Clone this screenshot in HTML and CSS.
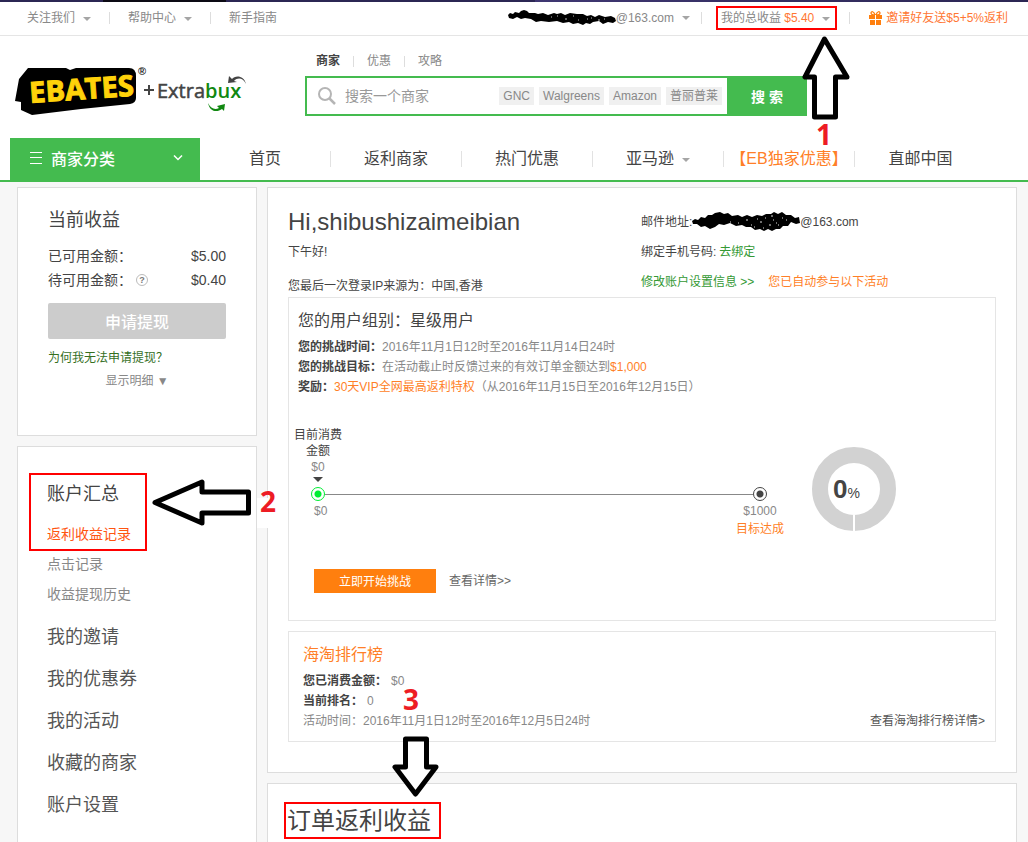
FILE: index.html
```html
<!DOCTYPE html>
<html lang="zh-CN">
<head>
    <meta charset="UTF-8">
    <meta name="viewport" content="width=device-width, initial-scale=1.0">
    <title>Ebates - 账户汇总</title>
    <link rel="stylesheet" href="styles.css">
</head>
<body>
    <div class="edge"></div>
    <div class="topbar">
        <ul class="top-links">
            <li><a href="#">关注我们<i class="caret"></i></a></li>
            <li><a href="#">帮助中心<i class="caret"></i></a></li>
            <li><a href="#">新手指南</a></li>
        </ul>
        <ul class="top-user">
            <li>
                <a href="#" class="account">
                    <svg width="109" height="18" viewBox="0 0 109 18">
                        <path d="M1 6 L3 4 L6 5 L8 3 L12 4 L14 2 L17 1 L20 2 L22 4 L28 4 L31 5 L36 4 L41 6 L47 4 L50 5 L54 4 L58 6 L63 4 L70 5 L76 5 L80 7 L84 6 L88 8 L92 6 L98 8 L104 7 L108 9 L109 12 L106 14 L101 13 L96 15 L92 12 L86 13 L83 15 L79 14 L76 16 L71 14 L66 15 L62 13 L56 14 L50 12 L42 13 L34 12 L29 13 L24 10 L18 9 L14 10 L10 8 L6 10 L2 9 Z" fill="#000"/>
                        <path d="M44 8h1M50 7h1M58 10h2M66 7h1M71 11h1M80 10h1M84 9h1M91 11h2M97 10h1" stroke="#bbb"/>
                    </svg>@163.com<i class="caret"></i>
                </a>
            </li>
            <li class="earn-item">
                <a href="#" class="earnings">我的总收益 <b>$5.40</b><i class="caret"></i></a>
                <svg class="mark mark-1" width="48" height="124" viewBox="0 0 48 124">
                    <path d="M22.5 3 L3 41 H12.5 V81 H33.5 V41 H45 Z"/>
                    <text x="14" y="109">1</text>
                </svg>
            </li>
            <li>
                <a href="#" class="invite">
                    <svg width="13" height="14" viewBox="0 0 13 14">
                        <path d="M0 4h6v4H0z M7 4h6v4H7z M1 9h5v5H1z M7 9h5v5H7z" fill="#ff7f0e"/>
                        <path d="M6 4C3 4 2 3 2 2C2 0 5 0 6 4M7 4C10 4 11 3 11 2C11 0 8 0 7 4" fill="none" stroke="#ff7f0e" stroke-width="1.3"/>
                    </svg>邀请好友送$5+5%返利
                </a>
            </li>
        </ul>
    </div>

    <header class="header">
        <a href="#" class="logo" aria-label="Ebates + Extrabux">
            <svg width="234" height="52" viewBox="0 0 234 52">
                <path d="M13 2 H51 L55 4 L61 2 H114 Q121 2 121 10 V32 Q121 37 115 38 L66 43 L17 49 L6 44 V36 L0 35 L4 13 Z" fill="#000"/>
                <text class="logo-ebates" x="15" y="37" transform="rotate(-4 15 37)">EBATES</text>
                <text class="logo-reg" x="123" y="9">®</text>
                <path d="M129 24 H139 M134 19 V29" stroke="#444" stroke-width="2"/>
                <text class="logo-extra" x="142" y="32">Extra<tspan>bux</tspan></text>
                <path d="M231 18 C229 9 220 9 217 13 L214 10 L213 17 L222 16 L219 15 C223 11 228 12 231 18 Z" fill="#444"/>
                <path d="M193 37 C195 47 203 46 207 43 L209 45 L210 38 L202 40 L204 42 C200 44 196 43 193 37 Z" fill="#118811"/>
            </svg>
        </a>
        <div class="search-area">
            <div class="search-tabs">
                <a href="#" class="active">商家</a>
                <a href="#">优惠</a>
                <a href="#">攻略</a>
            </div>
            <form class="search">
                <svg width="18" height="18" viewBox="0 0 18 18" fill="none" stroke="#b5b5b5" stroke-width="2">
                    <circle cx="7" cy="7" r="6"/>
                    <path d="M11.500 11.500 L17 17" stroke-width="2.500"/>
                </svg>
                <input type="text" placeholder="搜索一个商家" aria-label="搜索一个商家">
                <div class="hot-words">
                    <a href="#">GNC</a>
                    <a href="#">Walgreens</a>
                    <a href="#">Amazon</a>
                    <a href="#">普丽普莱</a>
                </div>
                <button type="button">搜 索</button>
            </form>
        </div>
    </header>

    <nav class="nav">
        <button type="button" class="category">
            <svg width="12" height="12" viewBox="0 0 12 12" stroke="#fff"><path d="M0 .5h12M0 5.500h12M0 11.500h12"/></svg>
            <span>商家分类</span>
            <svg width="10" height="6" viewBox="0 0 10 6" fill="none" stroke="#fff" stroke-width="1.500"><path d="M1 .5l4 4 4-4"/></svg>
        </button>
        <ul>
            <li><a href="#">首页</a></li>
            <li><a href="#">返利商家</a></li>
            <li><a href="#">热门优惠</a></li>
            <li><a href="#">亚马逊<i class="caret"></i></a></li>
            <li><a href="#" class="orange">【EB独家优惠】</a></li>
            <li><a href="#">直邮中国</a></li>
        </ul>
    </nav>

    <main class="main">
        <aside class="sidebar">
            <section class="panel balance">
                <h2>当前收益</h2>
                <p class="balance-row">已可用金额：<span>$5.00</span></p>
                <p class="balance-row">待可用金额：<i class="help">?</i><span>$0.40</span></p>
                <button type="button" class="withdraw" disabled>申请提现</button>
                <a href="#" class="why">为何我无法申请提现？</a>
                <a href="#" class="detail">显示明细 ▼</a>
            </section>
            <section class="panel menu">
                <div class="menu-summary">
                    <h2>账户汇总</h2>
                    <a href="#" class="current">返利收益记录</a>
                    <svg class="mark mark-2" width="140" height="60" viewBox="0 0 140 60">
                        <rect x="106" y="20" width="24" height="30" fill="#fff"/>
                        <path d="M4 24.500 L51 4 V14 H97.500 V35 H51 V45 Z"/>
                        <text x="109" y="34">2</text>
                    </svg>
                </div>
                <a href="#">点击记录</a>
                <a href="#">收益提现历史</a>
                <ul>
                    <li><a href="#">我的邀请</a></li>
                    <li><a href="#">我的优惠券</a></li>
                    <li><a href="#">我的活动</a></li>
                    <li><a href="#">收藏的商家</a></li>
                    <li><a href="#">账户设置</a></li>
                </ul>
            </section>
        </aside>

        <div class="content">
            <section class="panel overview">
                <div class="profile">
                    <div class="greeting">
                        <h1>Hi,shibushizaimeibian</h1>
                        <p>下午好!</p>
                        <p class="last-login">您最后一次登录IP来源为：中国,香港</p>
                    </div>
                    <div class="contact">
                        <p>邮件地址:<svg width="108" height="22" viewBox="0 0 108 22">
                            <path d="M0 10 L3 8 L6 9 L9 6 L13 7 L16 4 L20 4 L23 2 L28 1 L32 3 L36 2 L40 5 L46 4 L50 6 L55 4 L60 6 L65 4 L70 5 L74 3 L79 3 L82 1 L86 3 L90 1 L94 4 L99 4 L103 7 L107 6 L108 12 L104 13 L99 11 L96 15 L91 15 L88 18 L84 18 L80 20 L76 18 L72 20 L68 18 L63 19 L59 16 L54 16 L50 14 L44 15 L38 12 L32 14 L27 13 L23 16 L18 18 L13 15 L9 16 L5 13 L1 13 Z" fill="#000"/>
                            <path d="M38 11h1M46 12h1M54 9h2M59 14h1M62 16h1M68 11h2M73 7h1M77 14h2M81 9h1M84 12h1M86 14h1M90 7h1M71 17h1M65 8h1M79 5h2M94 9h1" stroke="#ddd"/>
                        </svg>@163.com</p>
                        <p>绑定手机号码: <a href="#" class="green">去绑定</a></p>
                        <p><a href="#" class="green">修改账户设置信息 &gt;&gt;</a><a href="#" class="orange joined">您已自动参与以下活动</a></p>
                    </div>
                </div>

                <div class="box challenge">
                    <h3>您的用户组别：星级用户</h3>
                    <p><b>您的挑战时间：</b>2016年11月1日12时至2016年11月14日24时</p>
                    <p><b>您的挑战目标：</b>在活动截止时反馈过来的有效订单金额达到<span class="orange">$1,000</span></p>
                    <p><b>奖励：</b><span class="orange">30天VIP全网最高返利特权</span>（从2016年11月15日至2016年12月15日）</p>
                    <div class="progress">
                        <div class="track">
                            <div class="track-now">
                                <span>目前消费金额</span>
                                <em>$0</em>
                                <i class="caret dark"></i>
                            </div>
                            <div class="track-line">
                                <i class="dot start"></i>
                                <i class="line"></i>
                                <i class="dot"></i>
                            </div>
                            <div class="track-ends">
                                <span>$0</span>
                                <span class="goal">$1000<em class="orange">目标达成</em></span>
                            </div>
                        </div>
                        <div class="donut"><p><b>0</b>%</p></div>
                    </div>
                    <div class="actions">
                        <button type="button">立即开始挑战</button>
                        <a href="#">查看详情&gt;&gt;</a>
                    </div>
                </div>

                <div class="box ranking">
                    <h3 class="orange">海淘排行榜</h3>
                    <p><b>您已消费金额：</b>$0</p>
                    <p><b>当前排名：</b>0</p>
                    <p class="ranking-time">活动时间：2016年11月1日12时至2016年12月5日24时 <a href="#">查看海淘排行榜详情&gt;</a></p>
                </div>
            </section>

            <section class="panel orders">
                <h2>订单返利收益
                    <svg class="mark mark-3" width="48" height="124" viewBox="0 0 48 124">
                        <text x="12" y="35">3</text>
                        <path d="M24.500 119 L4 92 H14.500 V64 H35.500 V92 H45 Z"/>
                    </svg>
                </h2>
            </section>
        </div>
    </main>
</body>
</html>
```
FILE: styles.css
```css
* {
    margin: 0;
    padding: 0;
    box-sizing: border-box;
}

body {
    display: flex;
    flex-direction: column;
    min-height: 100vh;
    font-family: "Liberation Sans", "Noto Sans CJK SC", sans-serif;
    font-size: 12px;
    line-height: 20px;
    color: #444;
    background-color: #f7f7f7;
}

a {
    color: inherit;
    text-decoration: none;
}

ul {
    list-style: none;
}

i,
em {
    font-style: normal;
}

h1,
h2,
h3 {
    font-weight: normal;
}

button {
    border: none;
    font-family: inherit;
    cursor: pointer;
}

.orange {
    color: #ff7f27;
}

.green {
    color: #339933;
}

.caret {
    display: inline-block;
    border: 4px solid transparent;
    border-top-color: #a5a5a5;
    border-bottom: none;
    margin-left: 8px;
    vertical-align: middle;
}

.caret.dark {
    border-width: 5px;
    border-bottom: none;
    border-top-color: #444;
    margin: 0;
}

/* hand drawn notes over the page */
.mark {
    position: absolute;
    z-index: 10;
    pointer-events: none;
}

.mark path {
    fill: #fff;
    stroke: #000;
    stroke-width: 5px;
    stroke-linejoin: round;
}

.mark text {
    font: bold 28px "Open Sans", sans-serif;
    fill: #ed1c24;
}

/* top bar */
.edge {
    height: 2px;
    background: linear-gradient(90deg, #2b2653 10%, #0c0a14 10%, #0c0a14 22%, #2b2653 22%, #2b2653 52%, #3f3772 52%, #2b2653);
}

.topbar {
    display: flex;
    justify-content: space-between;
    align-items: center;
    height: 34px;
    padding: 0 20px 1px 27px;
    background-color: #fff;
    border-bottom: 1px solid #e5e5e5;
    color: #888;
}

.topbar ul {
    display: flex;
    align-items: center;
}

.topbar li {
    display: flex;
    align-items: center;
    white-space: nowrap;
}

.topbar li + li::before {
    content: "";
    height: 12px;
    margin: 0 18px;
    border-left: 1px solid #ddd;
}

.topbar .top-user li + li::before {
    margin: 0 19px 0 12px;
}

.topbar .top-user .earn-item::before {
    margin: 0 14px 0 11px;
}

.account,
.invite {
    display: flex;
    align-items: center;
}

.earn-item {
    position: relative;
}

.earnings {
    padding: 0 5px 0 3px;
    border: 2px solid #f00;
}

.earnings b {
    font-weight: normal;
    color: #ff7733;
}

.invite {
    gap: 4px;
    color: #ff7733;
}

.mark-1 {
    right: -13px;
    top: 30px;
}

/* header */
.header {
    display: flex;
    height: 102px;
    padding: 15px 15px 0;
    background-color: #fff;
}

.logo {
    flex: 0 0 290px;
    padding-top: 15px;
}

.logo-ebates {
    font: bold 29px "Open Sans", sans-serif;
    fill: #ffd20a;
    stroke: #ffd20a;
    stroke-width: 1px;
}

.logo-reg {
    font: bold 11px "Liberation Sans", sans-serif;
    fill: #222;
}

.logo-extra {
    font: 20px "Open Sans", sans-serif;
    fill: #444;
    stroke: #444;
    stroke-width: 0.5px;
}

.logo-extra tspan {
    font-weight: 600;
    fill: #118811;
    stroke: none;
}

.search-area {
    flex: 0 1 502px;
}

.search-tabs {
    display: flex;
    align-items: center;
    padding-left: 11px;
    margin-bottom: 5px;
    color: #888;
}

.search-tabs a + a::before {
    content: "";
    display: inline-block;
    height: 11px;
    margin: 0 13px;
    border-left: 1px solid #ddd;
    vertical-align: middle;
}

.search-tabs .active {
    font-weight: bold;
    color: #444;
}

.search {
    display: flex;
    align-items: center;
    height: 40px;
    padding-left: 11px;
    border: 2px solid #44bb4f;
    border-right: none;
}

.search input {
    flex: 1;
    min-width: 0;
    margin-left: 9px;
    border: none;
    outline: none;
    font: 14px "Liberation Sans", "Noto Sans CJK SC", sans-serif;
}

.search input::placeholder {
    color: #999;
}

.hot-words {
    display: flex;
    gap: 5px;
    margin-right: 5px;
}

.hot-words a {
    padding: 0 4px;
    line-height: 18px;
    color: #888;
    background-color: #f0f0f0;
}

.search button {
    width: 80px;
    height: 40px;
    background-color: #44bb4f;
    color: #fff;
    font-size: 14px;
    font-weight: bold;
}

/* navigation */
.nav {
    display: flex;
    height: 44px;
    padding-left: 10px;
    background-color: #fff;
    border-bottom: 2px solid #44bb4f;
}

.category {
    display: flex;
    align-items: center;
    flex: 0 0 190px;
    padding: 0 17px 2px 20px;
    background-color: #44bb4f;
    color: #fff;
    font-size: 16px;
    font-weight: 500;
}

.category span {
    flex: 1;
    margin-left: 9px;
    text-align: left;
}

.nav ul {
    display: flex;
    align-items: center;
}

.nav li {
    width: 131px;
    border-right: 1px solid #e2e2e2;
    font-size: 16px;
    line-height: 16px;
    text-align: center;
    white-space: nowrap;
}

.nav li:last-child {
    border-right: none;
}

/* layout */
.main {
    display: flex;
    flex: 1;
    gap: 10px;
    padding: 5px 11px 0 17px;
}

.sidebar,
.content {
    display: flex;
    flex-direction: column;
    gap: 10px;
}

.sidebar {
    flex: 0 0 240px;
}

.content {
    flex: 1;
    min-width: 0;
}

.panel {
    background-color: #fff;
    border: 1px solid #ddd;
}

.menu,
.orders {
    flex: 1;
    border-bottom: none;
}

/* balance */
.balance {
    padding: 20px 30px 44px;
}

.balance h2 {
    margin-bottom: 12px;
    font-size: 18px;
    line-height: 24px;
}

.balance-row {
    display: flex;
    align-items: center;
    font-size: 14px;
    line-height: 24px;
}

.balance-row span {
    margin-left: auto;
}

.help {
    width: 12px;
    height: 12px;
    margin-left: 4px;
    border: 1px solid #bbb;
    border-radius: 50%;
    font-size: 9px;
    font-weight: bold;
    line-height: 10px;
    text-align: center;
    color: #777;
}

.withdraw {
    display: block;
    width: 100%;
    height: 36px;
    margin: 11px 0 9px;
    border-radius: 2px;
    background-color: #ccc;
    color: #fff;
    font-size: 16px;
    font-weight: 500;
}

.why {
    display: block;
    color: #36701f;
}

.detail {
    display: block;
    margin-top: 3px;
    text-align: center;
    color: #888;
}

/* account menu */
.menu {
    padding: 26px 12px 0 11px;
    font-size: 14px;
    line-height: 30px;
    color: #888;
}

.menu > a {
    display: block;
    padding-left: 18px;
}

.menu > .menu-summary + a {
    margin-top: -2px;
}

.menu-summary {
    position: relative;
    width: 118px;
    padding: 4px 0 0 16px;
    border: 2px solid #f00;
}

.menu-summary h2 {
    margin-bottom: 10px;
    font-size: 18px;
    color: #444;
}

.menu-summary a {
    display: block;
    color: #ff5511;
}

.mark-2 {
    left: 120px;
    top: 3px;
}

.menu ul {
    padding: 7px 0 0 18px;
    font-size: 18px;
    line-height: 42px;
    color: #555;
}

/* overview */
.overview {
    padding: 22px 20px 30px;
}

.profile {
    display: flex;
    height: 87px;
}

.greeting {
    flex: 1;
}

.greeting h1 {
    margin-bottom: 8px;
    font-size: 24px;
    line-height: 24px;
}

.last-login {
    margin-top: 14px;
}

.contact {
    flex: 0 0 355px;
    line-height: 30px;
    white-space: nowrap;
}

.contact p {
    display: flex;
    align-items: center;
    gap: 0 3px;
    height: 30px;
}

.contact p:first-child {
    height: 24px;
    margin-bottom: 3px;
    gap: 0;
}

.contact .joined {
    margin-left: 11px;
}

.box {
    border: 1px solid #e5e5e5;
    color: #888;
}

.box p b {
    color: #444;
}

.box h3 {
    font-size: 16px;
    line-height: 26px;
}

.challenge {
    padding: 10px 9px 27px;
}

.challenge h3 {
    margin-bottom: 3px;
    color: #444;
}

.progress {
    display: flex;
    gap: 28px;
    margin: 30px 90px 0 -4px;
    line-height: 16px;
}

.track {
    flex: 1;
}

.track-now {
    display: flex;
    flex-direction: column;
    align-items: center;
    width: 48px;
    height: 60px;
    text-align: center;
}

.track-now span {
    color: #444;
}

.track-now .caret {
    margin-top: 2px;
}

.track-line {
    display: flex;
    align-items: center;
    padding: 0 17px;
}

.dot {
    width: 14px;
    height: 14px;
    border: 1px solid #444;
    border-radius: 50%;
    background: radial-gradient(circle, #444 3px, #fff 4px);
}

.dot.start {
    border-color: #00ee33;
    background: radial-gradient(circle, #00ee33 3px, #fff 4px);
}

.line {
    flex: 1;
    height: 1px;
    background-color: #888;
}

.track-ends {
    display: flex;
    justify-content: space-between;
    padding: 2px 0 0 20px;
}

.goal {
    width: 48px;
    text-align: center;
}

.goal em {
    display: block;
    margin-top: 2px;
}

.donut {
    position: relative;
    width: 84px;
    height: 84px;
    margin-top: 20px;
    border: 16px solid #d2d2d2;
    border-radius: 50%;
}

.donut::after {
    content: "";
    position: absolute;
    left: 25px;
    bottom: -16px;
    width: 2px;
    height: 16px;
    background-color: #fff;
}

.donut p {
    padding-left: 5px;
    font-size: 14px;
    line-height: 52px;
    color: #444;
}

.donut b {
    font-size: 26px;
}

.actions {
    display: flex;
    align-items: center;
    gap: 13px;
    margin: 32px 0 0 16px;
    color: #666;
}

.actions button {
    width: 122px;
    height: 24px;
    padding-bottom: 2px;
    background-color: #ff7f0e;
    color: #fff;
    font-size: 12px;
}

.ranking {
    margin-top: 10px;
    padding: 10px 10px 10px 14px;
}

.ranking h3 {
    margin-bottom: 3px;
}

.ranking b {
    margin-right: 4px;
}

.ranking-time {
    display: flex;
    justify-content: space-between;
}

.ranking-time a {
    color: #555;
}

/* orders */
.orders {
    padding: 18px 16px 0;
}

.orders h2 {
    position: relative;
    width: 157px;
    padding: 1px 0 0 1px;
    border: 2px solid #f00;
    font-size: 24px;
    line-height: 32px;
    white-space: nowrap;
}

.mark-3 {
    left: 105px;
    top: -129px;
}
```
